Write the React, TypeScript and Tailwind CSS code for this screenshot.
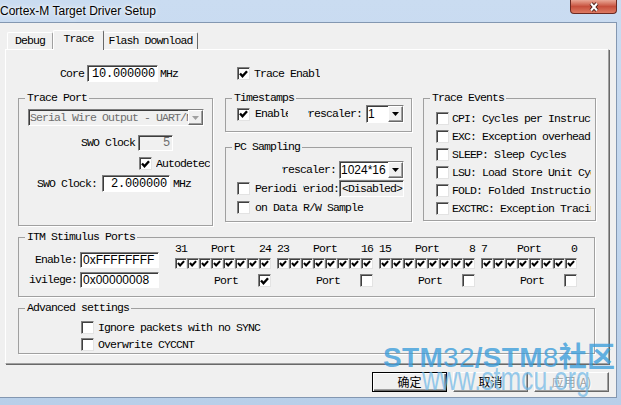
import { ReactNode } from 'react'

// classic 3D edges
const sunken =
  'border border-t-[#7f7f7f] border-l-[#7f7f7f] border-r-white border-b-white shadow-[inset_1px_1px_0_#3c3c3c]'
const raised =
  'border border-t-white border-l-white border-r-[#696969] border-b-[#696969] shadow-[inset_-1px_-1px_0_#a0a0a0]'

function Check({ on, small }: { on?: boolean; small?: boolean }) {
  return (
    <span
      className={`${small ? 'w-[12px] h-[11px]' : 'w-[13px] h-[13px]'} shrink-0 flex items-center justify-center bg-white border border-t-[#808080] border-l-[#808080] border-r-[#e3e3e3] border-b-[#e3e3e3] shadow-[inset_1px_1px_0_#404040]`}
    >
      {on && (
        <svg width={small ? 8 : 9} height={small ? 7 : 8} viewBox="0 0 9 8">
          <path d="M1 3.5 L3.5 6.2 L8 1.3" fill="none" stroke="#000" strokeWidth="2.4" />
        </svg>
      )}
    </span>
  )
}

// label text cut off by its control width
function Cut({ w, end, children }: { w: string; end?: boolean; children: ReactNode }) {
  return (
    <span className={`${w} shrink-0 flex overflow-hidden whitespace-nowrap ${end ? 'justify-end' : ''}`}>
      <span className="shrink-0">{children}</span>
    </span>
  )
}

function Field({
  w,
  value,
  right,
  disabled,
  sans,
  plain,
}: {
  w: string
  value: string
  right?: boolean
  disabled?: boolean
  sans?: boolean
  plain?: boolean
}) {
  const font = sans
    ? "font-['Liberation_Sans',sans-serif] text-[12px] tracking-normal"
    : plain
      ? ''
      : 'text-[12px] tracking-[-0.2px]'
  return (
    <span
      className={`${w} ${sunken} shrink-0 flex items-center overflow-hidden whitespace-nowrap ${right ? 'justify-end pr-[2px]' : 'pl-[2px]'} ${disabled ? 'bg-[#f0f0f0] text-[#6d6d6d]' : plain ? 'bg-[#f0f0f0]' : 'bg-white'} ${font}`}
    >
      {value}
    </span>
  )
}

function Combo({ w, value, disabled, sans }: { w: string; value: string; disabled?: boolean; sans?: boolean }) {
  return (
    <div className={`${w} ${sunken} shrink-0 flex ${disabled ? 'bg-[#f0f0f0] text-[#6d6d6d]' : 'bg-white'}`}>
      <span
        className={`flex-1 flex items-center overflow-hidden whitespace-nowrap pl-[1px] ${sans ? "font-['Liberation_Sans',sans-serif] text-[12px] tracking-normal" : ''}`}
      >
        {value}
      </span>
      <span className={`w-[15px] ${raised} bg-[#f0f0f0] flex items-center justify-center`}>
        <svg width="7" height="4" viewBox="0 0 7 4">
          <path d="M0 0h7L3.5 4z" fill={disabled ? '#a0a0a0' : '#000'} />
        </svg>
      </span>
    </div>
  )
}

function Group({ title, box, children }: { title: string; box: string; children: ReactNode }) {
  return (
    <fieldset className={`${box} shrink-0 border border-[#a0a0a0] shadow-[1px_1px_0_#fff]`}>
      <legend className="ml-[6px] px-[2px] leading-[12px]">{title}</legend>
      {children}
    </fieldset>
  )
}

function Btn({ label, def, off }: { label: string; def?: boolean; off?: boolean }) {
  return (
    <button
      className={`w-[75px] h-[20px] flex items-center justify-center bg-[#f0f0f0] font-['Noto_Sans_CJK_SC',sans-serif] text-[12px] tracking-normal ${
        def
          ? 'border border-black shadow-[inset_1px_1px_0_#fff,inset_-1px_-1px_0_#696969,inset_-2px_-2px_0_#a0a0a0]'
          : raised
      } ${off ? 'text-[#a0a0a0] [text-shadow:1px_1px_0_#fff]' : 'text-black'}`}
    >
      {label}
    </button>
  )
}

const events = [
  'CPI: Cycles per Instruction',
  'EXC: Exception overhead',
  'SLEEP: Sleep Cycles',
  'LSU: Load Store Unit Cycles',
  'FOLD: Folded Instructions',
  'EXCTRC: Exception Tracing',
]

const ports = [
  { hi: '31', lo: '24', on: true },
  { hi: '23', lo: '16', on: false },
  { hi: '15', lo: '8', on: false },
  { hi: '7', lo: '0', on: false },
]

export default function App() {
  return (
    <div className="relative w-[621px] h-[405px] overflow-hidden bg-gradient-to-b from-[#cadcf1] via-[#c3d7ee] to-[#b8cfe9] font-['Liberation_Mono','Noto_Sans_CJK_SC',monospace] text-[11.5px] tracking-[-0.9px] leading-[12px] text-black">
      {/* title bar */}
      <div className="h-[22px] flex items-start justify-between">
        <span className="mt-[4px] font-['Liberation_Sans',sans-serif] text-[12px] tracking-normal leading-[14px] [text-shadow:0_0_6px_#fff,0_0_3px_#fff]">
          Cortex-M Target Driver Setup
        </span>
        <div className="mr-[4px] w-[47px] h-[14px] rounded-b-[4px] border border-t-0 border-[#6b2a22] bg-gradient-to-b from-[#e9a796] via-[#c64f3c] to-[#dd7a62] flex items-center justify-center">
          <svg width="14" height="10" viewBox="0 0 14 10">
            <path d="M4 1.5 L10 8.5 M10 1.5 L4 8.5" stroke="#4a1e18" strokeWidth="4" />
            <path d="M4 1.5 L10 8.5 M10 1.5 L4 8.5" stroke="#fff" strokeWidth="2" />
          </svg>
        </div>
      </div>

      {/* dialog body */}
      <div className="w-[617px] h-[376px] bg-[#f0f0f0] border-t border-r border-b border-[#8397b1] flex flex-col">
        {/* tabs */}
        <div className="pt-[7px] pl-[7px] flex items-end h-[26px]">
          <div className="w-[46px] h-[17px] flex items-center justify-center border-t border-l border-r border-t-white border-l-white border-r-[#a0a0a0] rounded-t-[2px]">
            Debug
          </div>
          <div className="relative z-10 -mb-[1px] w-[51px] h-[20px] flex items-center justify-center pb-[3px] bg-[#f0f0f0] border-t border-l border-r border-t-white border-l-white border-r-[#696969] rounded-t-[2px]">
            Trace
          </div>
          <div className="w-[94px] h-[17px] flex items-center justify-center border-t border-r border-t-white border-r-[#696969] rounded-t-[2px]">
            Flash Download
          </div>
        </div>

        {/* tab page */}
        <div className="ml-[5px] w-[604px] h-[315px] border border-t-white border-l-white border-r-[#a0a0a0] border-b-[#a0a0a0] shadow-[1px_1px_0_#696969] pl-[12px] flex flex-col">
          {/* core clock / trace enable */}
          <div className="mt-[15px] h-[17px] flex items-center">
            <div className="w-[207px] flex items-center pl-[42px]">
              <span>Core</span>
              <span className="ml-[3px]">
                <Field w="w-[71px] h-[17px]" value="10.000000" right />
              </span>
              <span className="ml-[2px]">MHz</span>
            </div>
            <div className="pl-[12px] flex items-center">
              <Check on />
              <span className="ml-[4px]">
                <Cut w="w-[66px]">Trace Enable</Cut>
              </span>
            </div>
          </div>

          <div className="mt-[10px] flex items-start">
            <Group title="Trace Port" box="w-[195px] h-[134px]">
              <div className="mt-[5px] ml-[9px]">
                <Combo w="w-[176px] h-[17px]" value="Serial Wire Output - UART/NRZ" disabled />
              </div>
              <div className="mt-[9px] h-[16px] flex items-center pl-[62px]">
                <span>SWO Clock</span>
                <span className="ml-[3px]">
                  <Field w="w-[35px] h-[16px]" value="5" right disabled />
                </span>
              </div>
              <div className="mt-[6px] h-[13px] flex items-center pl-[120px]">
                <Check on />
                <span className="ml-[4px]">
                  <Cut w="w-[54px]">Autodetect</Cut>
                </span>
              </div>
              <div className="mt-[5px] h-[17px] flex items-center pl-[18px]">
                <span>SWO Clock:</span>
                <span className="ml-[5px]">
                  <Field w="w-[68px] h-[17px]" value="2.000000" right />
                </span>
                <span className="ml-[3px]">MHz</span>
              </div>
            </Group>

            <div className="ml-[12px] w-[187px] flex flex-col">
              <Group title="Timestamps" box="w-[187px] h-[40px]">
                <div className="mt-[1px] h-[18px] flex items-center pl-[11px] pr-[7px]">
                  <Check on />
                  <span className="ml-[5px]">
                    <Cut w="w-[33px]">Enable</Cut>
                  </span>
                  <span className="ml-auto">
                    <Cut w="w-[54px]" end>
                      Prescaler:
                    </Cut>
                  </span>
                  <span className="ml-[4px]">
                    <Combo w="w-[38px] h-[18px]" value="1" sans />
                  </span>
                </div>
              </Group>
              <div className="mt-[9px]">
                <Group title="PC Sampling" box="w-[187px] h-[81px]">
                  <div className="mt-[8px] h-[18px] flex items-center justify-end pr-[7px]">
                    <Cut w="w-[54px]" end>
                      Prescaler:
                    </Cut>
                    <span className="ml-[3px]">
                      <Combo w="w-[65px] h-[18px]" value="1024*16" sans />
                    </span>
                  </div>
                  <div className="mt-[1px] h-[17px] flex items-center pl-[11px] pr-[7px]">
                    <Check />
                    <span className="ml-[5px]">
                      <Cut w="w-[42px]">Periodic</Cut>
                    </span>
                    <span className="ml-[6px]">
                      <Cut w="w-[36px]" end>
                        Period:
                      </Cut>
                    </span>
                    <span className="ml-auto">
                      <Field w="w-[65px] h-[17px]" value="<Disabled>" plain />
                    </span>
                  </div>
                  <div className="mt-[4px] h-[13px] flex items-center pl-[11px]">
                    <Check />
                    <span className="ml-[5px]">on Data R/W Sample</span>
                  </div>
                </Group>
              </div>
            </div>

            <div className="ml-[11px]">
              <Group title="Trace Events" box="w-[173px] h-[129px]">
                <div className="mt-[8px] pl-[12px] flex flex-col gap-[5px]">
                  {events.map((e) => (
                    <div key={e} className="h-[13px] flex items-center">
                      <Check />
                      <span className="ml-[3px]">
                        <Cut w="w-[139px]">{e}</Cut>
                      </span>
                    </div>
                  ))}
                </div>
              </Group>
            </div>
          </div>

          <div className="mt-[5px]">
            <Group title="ITM Stimulus Ports" box="w-[577px] h-[66px]">
              <div className="flex items-start">
                <div className="ml-[10px] mt-[9px] flex flex-col gap-[4px]">
                  <div className="flex items-center">
                    <Cut w="w-[48px]" end>
                      Enable:
                    </Cut>
                    <span className="ml-[3px]">
                      <Field w="w-[79px] h-[16px]" value="0xFFFFFFFF" sans />
                    </span>
                  </div>
                  <div className="flex items-center">
                    <Cut w="w-[48px]" end>
                      Privilege:
                    </Cut>
                    <span className="ml-[3px]">
                      <Field w="w-[79px] h-[16px]" value="0x00000008" sans />
                    </span>
                  </div>
                </div>
                <div className="ml-[16px] flex gap-[6px]">
                  {ports.map((p) => (
                    <div key={p.hi} className="w-[96px] flex flex-col">
                      <div className="h-[12px] grid grid-cols-[1fr_auto_1fr]">
                        <span>{p.hi}</span>
                        <span>Port</span>
                        <span className="text-right">{p.lo}</span>
                      </div>
                      <div className="mt-[3px] flex">
                        {Array.from({ length: 8 }).map((_, i) => (
                          <Check key={i} on small />
                        ))}
                      </div>
                      <div className="mt-[5px] h-[13px] flex items-center">
                        <span className="ml-[39px]">Port</span>
                        <span className="ml-auto">
                          <Check on={p.on} />
                        </span>
                      </div>
                    </div>
                  ))}
                </div>
              </div>
            </Group>
          </div>

          <div className="mt-[5px]">
            <Group title="Advanced settings" box="w-[577px] h-[52px]">
              <div className="mt-[7px] pl-[62px] flex flex-col gap-[4px]">
                <div className="h-[13px] flex items-center">
                  <Check />
                  <span className="ml-[4px]">Ignore packets with no SYNC</span>
                </div>
                <div className="h-[13px] flex items-center">
                  <Check />
                  <span className="ml-[4px]">Overwrite CYCCNT</span>
                </div>
              </div>
            </Group>
          </div>
        </div>

        {/* dialog buttons */}
        <div className="mt-[8px] flex justify-end gap-[6px] pr-[7px]">
          <Btn label="确定" def />
          <Btn label="取消" />
          <Btn label="应用(A)" off />
        </div>
      </div>

      {/* forum watermark stamped over the shot */}
      <div className="pointer-events-none absolute left-[383px] top-[344px] font-['Liberation_Sans','Noto_Sans_CJK_SC',sans-serif] tracking-normal">
        <div className="text-[28px] leading-[28px] whitespace-nowrap text-[#3b9ddb]/80 tracking-[0.3px]">
          <b>STM</b>32<b>/STM</b>8<b>社区</b>
        </div>
        <div className="-mt-[10px] ml-[39px] text-[33px] leading-[33px] whitespace-nowrap text-[#6cb6e6]/70 origin-left scale-x-[0.75]">
          www.stmcu.org
        </div>
      </div>
    </div>
  )
}
